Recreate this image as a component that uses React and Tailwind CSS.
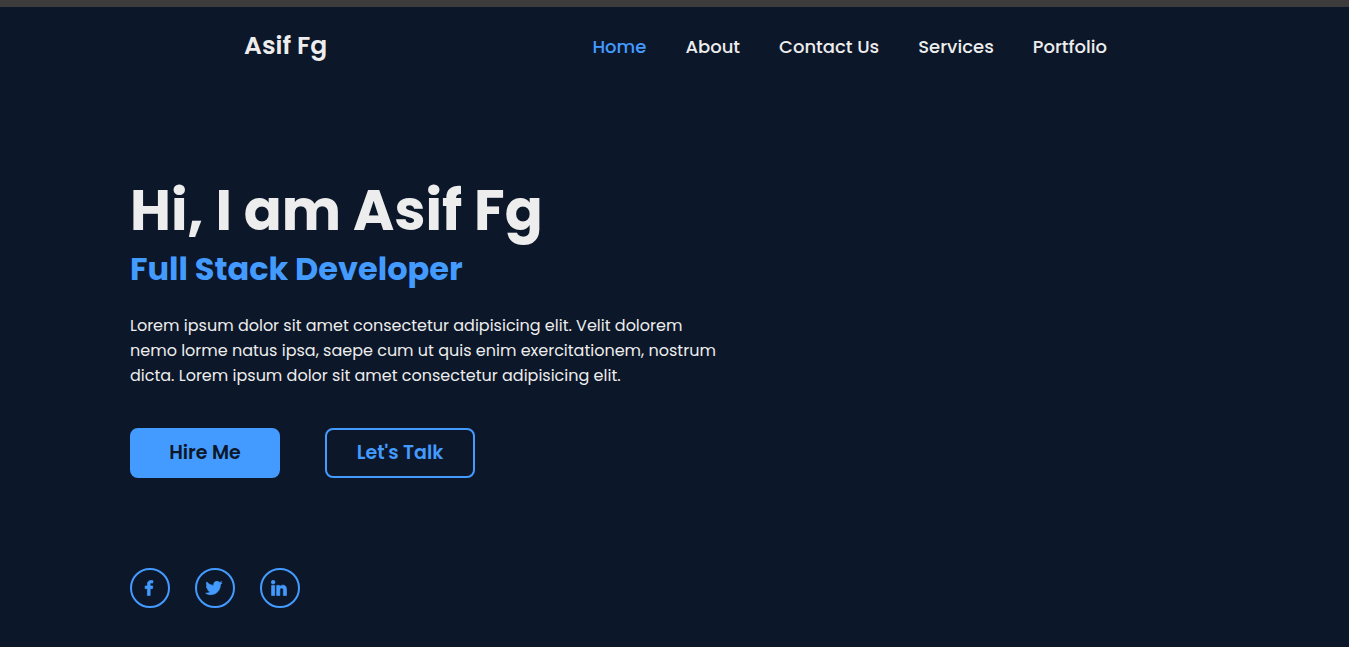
import { BiLogoFacebook, BiLogoTwitter, BiLogoLinkedin } from "react-icons/bi";

const links = ["Home", "About", "Contact Us", "Services", "Portfolio"];
const socials = [
  { name: "Facebook", Icon: BiLogoFacebook },
  { name: "Twitter", Icon: BiLogoTwitter },
  { name: "LinkedIn", Icon: BiLogoLinkedin },
];

export default function App() {
  return (
    <div className="min-h-screen border-t-[7px] border-[#3c3c3c] bg-[#0c1729] font-[Poppins,Inter,sans-serif] text-[#ededed]">
      <header className="flex items-center justify-between py-5 pr-[242px] pl-[244px]">
        <a href="#" className="pb-0.5 text-[25px] leading-[38px] font-semibold">Asif Fg</a>
        <nav className="flex gap-[39px] text-lg font-medium">
          {links.map((l, i) => (
            <a key={l} href="#" className={i === 0 ? "text-[#449bff]" : ""}>{l}</a>
          ))}
        </nav>
      </header>
      <main className="px-[130px] pt-[90px]">
        <h1 className="text-[56px] leading-[68px] font-bold">Hi, I am Asif Fg</h1>
        <h2 className="text-[32px] leading-[48px] font-bold text-[#449bff]">Full Stack Developer</h2>
        <p className="mt-5 max-w-[600px] text-base leading-[25px]">
          Lorem ipsum dolor sit amet consectetur adipisicing elit. Velit dolorem nemo lorme natus ipsa, saepe cum ut quis enim exercitationem, nostrum dicta. Lorem ipsum dolor sit amet consectetur adipisicing elit.
        </p>
        <div className="mt-10 flex gap-[45px] text-[19px] font-semibold">
          <button className="h-[50px] w-[150px] rounded-lg border-2 border-[#449bff] bg-[#449bff] text-[#0c1729]">Hire Me</button>
          <button className="h-[50px] w-[150px] rounded-lg border-2 border-[#449bff] text-[#449bff]">Let's Talk</button>
        </div>
        <div className="mt-[90px] flex gap-[25px] pb-[39px]">
          {socials.map(({ name, Icon }) => (
            <a key={name} href="#" aria-label={name} className="flex size-10 items-center justify-center rounded-full border-2 border-[#449bff] pr-0.5 text-xl text-[#449bff]">
              <Icon className="stroke-current [stroke-width:0.8]" />
            </a>
          ))}
        </div>
      </main>
    </div>
  );
}
